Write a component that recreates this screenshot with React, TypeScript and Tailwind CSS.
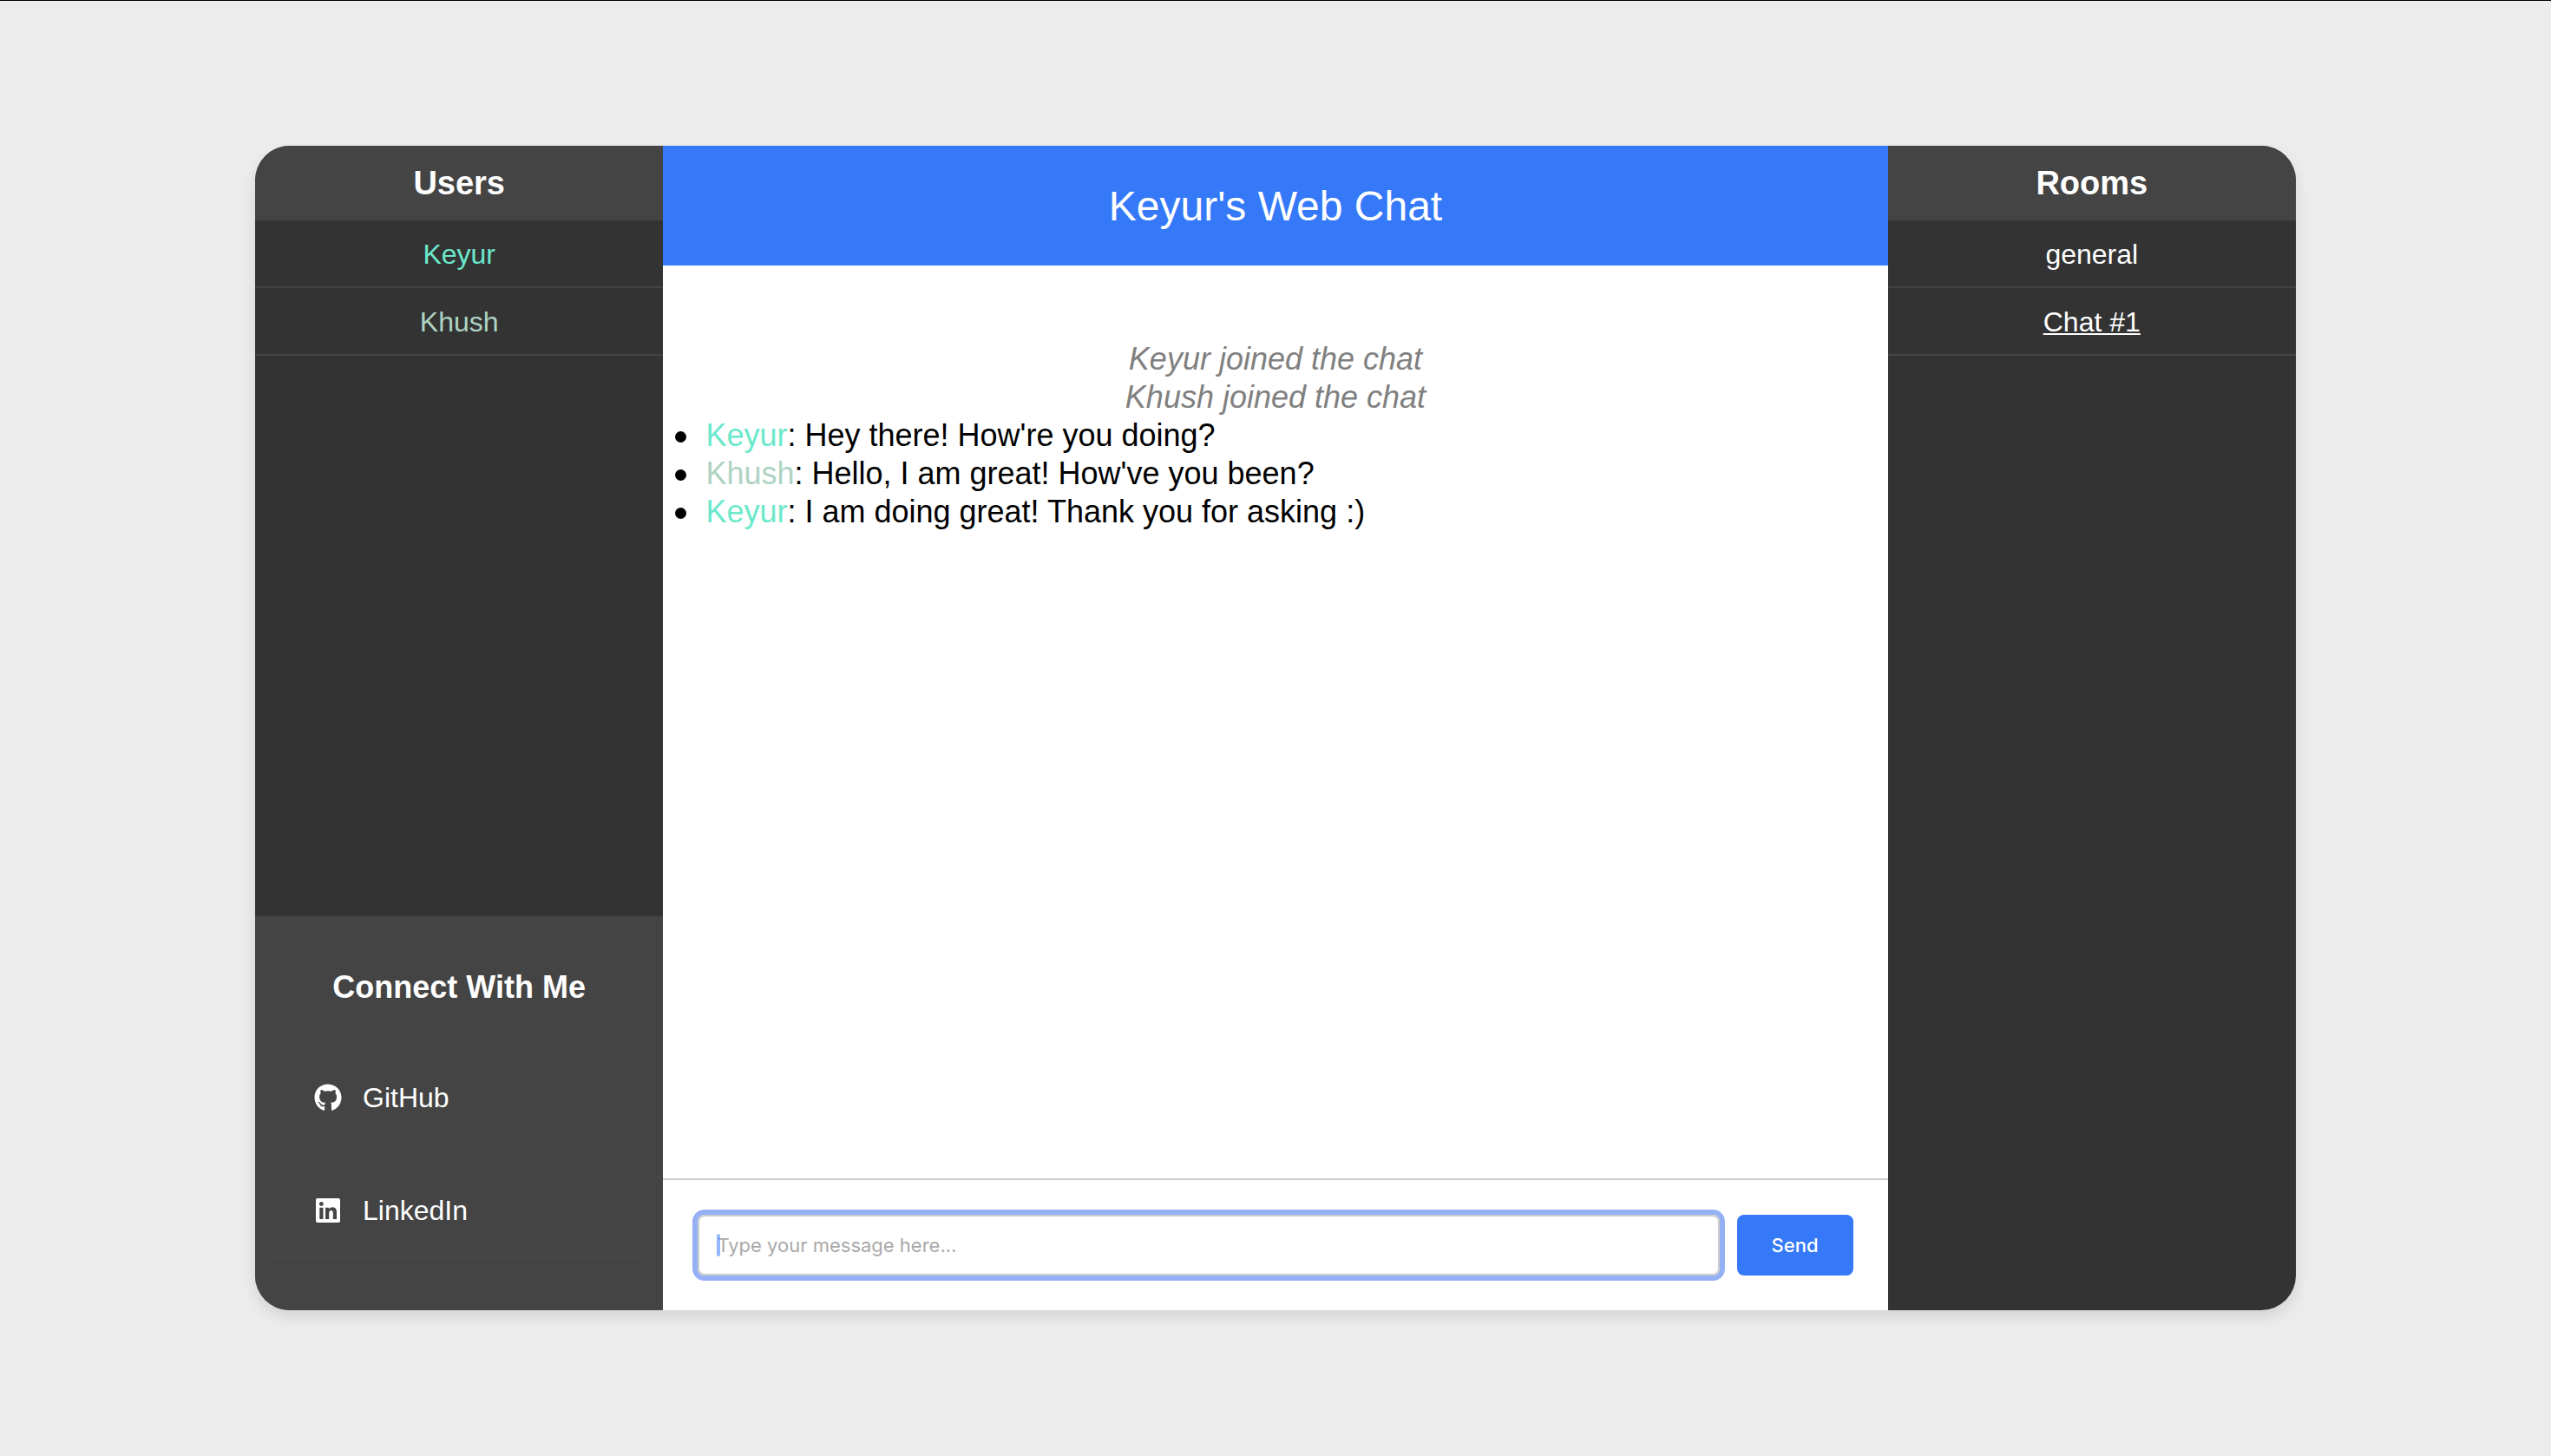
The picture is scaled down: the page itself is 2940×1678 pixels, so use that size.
import { FaGithub, FaLinkedin } from "react-icons/fa";

const users = [
  { name: "Keyur", color: "text-[#6ce8cb]" },
  { name: "Khush", color: "text-[#afd3c2]" },
];

const rooms = [
  { name: "general", active: false },
  { name: "Chat #1", active: true },
];

const notices = ["Keyur joined the chat", "Khush joined the chat"];

const messages = [
  { user: users[0], text: "Hey there! How're you doing?" },
  { user: users[1], text: "Hello, I am great! How've you been?" },
  { user: users[0], text: "I am doing great! Thank you for asking :)" },
];

const links = [
  { label: "GitHub", href: "https://github.com", Icon: FaGithub },
  { label: "LinkedIn", href: "https://linkedin.com", Icon: FaLinkedin },
];

function PanelTitle({ children }: { children: string }) {
  return (
    <h2 className="bg-[#444444] py-[21px] text-center text-[38px] leading-[44px] font-bold">
      {children}
    </h2>
  );
}

export default function App() {
  return (
    <div className="flex h-screen flex-col items-center justify-center bg-[#ececec] font-['Liberation_Sans',Arial,sans-serif] text-white shadow-[inset_0_1px_0_#000000]">
      <div className="flex h-4/5 w-4/5 overflow-hidden rounded-[40px] shadow-[0_8px_16px_rgba(0,0,0,0.1)]">
        <aside className="flex w-1/5 flex-col bg-[#333333]">
          <PanelTitle>Users</PanelTitle>
          <ul className="flex-1 text-center text-[32px] leading-9">
            {users.map((u) => (
              <li key={u.name} className={`border-b-2 border-[#444444] pt-[21px] pb-[19px] ${u.color}`}>
                {u.name}
              </li>
            ))}
          </ul>
          <section className="bg-[#444444] px-5 py-[60px]">
            <h3 className="mb-[30px] text-center text-[36px] leading-[44px] font-bold">Connect With Me</h3>
            <ul className="text-[32px] leading-9">
              {links.map(({ label, href, Icon }) => (
                <li key={label} className="border-b-2 border-[#474747]">
                  <a href={href} className="flex items-center pt-[57px] pb-[35px] pl-12">
                    <Icon className="mr-6 size-8" />
                    {label}
                  </a>
                </li>
              ))}
            </ul>
          </section>
        </aside>

        <main className="flex w-3/5 flex-col bg-white text-black">
          <h1 className="bg-[#3579f8] pt-[41px] pb-[39px] text-center text-[48px] leading-[58px] text-white">
            Keyur's Web Chat
          </h1>
          <div className="flex-1 pt-[86px] text-[36px] leading-[44px]">
            {notices.map((n) => (
              <p key={n} className="text-center text-[#808080] italic">
                {n}
              </p>
            ))}
            <ul>
              {messages.map((m) => (
                <li
                  key={m.text}
                  className="flex items-center before:mt-1 before:mr-[22px] before:ml-[14px] before:size-[13px] before:rounded-full before:bg-black"
                >
                  <p>
                    <span className={m.user.color}>{m.user.name}</span>: {m.text}
                  </p>
                </li>
              ))}
            </ul>
          </div>
          <form
            className="flex gap-5 border-t-2 border-[#cccccc] p-10 font-[Inter,sans-serif] text-[22px]"
            onSubmit={(e) => e.preventDefault()}
          >
            <div className="relative flex-1">
              <input
                type="text"
                aria-label="Message"
                placeholder="Type your message here..."
                className="h-[70px] w-full rounded-lg border-2 border-[#cccccc] px-5 ring-6 ring-[#95b1f5] outline-none placeholder:text-[#a9a9a9]"
              />
              <span className="absolute top-[22px] left-[22px] h-[26px] w-1 rounded-full bg-[#6699ff]/70" />
            </div>
            <button type="submit" className="w-[134px] rounded-lg bg-[#3579f8] font-medium text-white">
              Send
            </button>
          </form>
        </main>

        <aside className="w-1/5 bg-[#333333]">
          <PanelTitle>Rooms</PanelTitle>
          <ul className="text-center text-[32px] leading-9">
            {rooms.map((r) => (
              <li key={r.name} className="border-b-2 border-[#444444] pt-[21px] pb-[19px]">
                <a
                  href="#"
                  className={r.active ? "underline decoration-2 underline-offset-2" : undefined}
                >
                  {r.name}
                </a>
              </li>
            ))}
          </ul>
        </aside>
      </div>
    </div>
  );
}
